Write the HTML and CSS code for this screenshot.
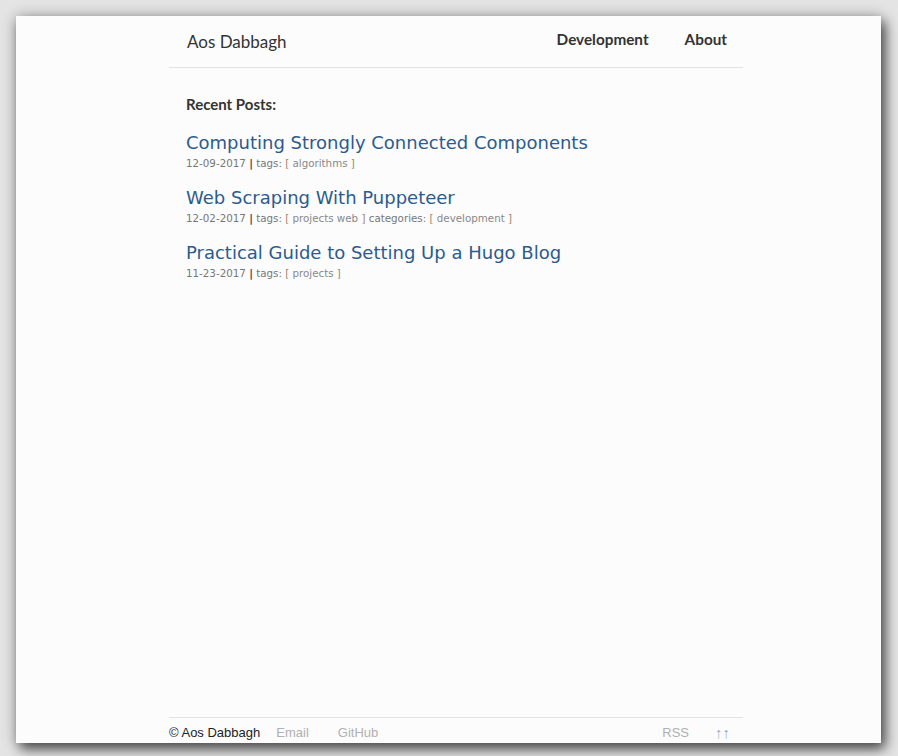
FILE: index.html
```html
<!DOCTYPE html>
<html>
<head>
<meta charset="utf-8">
<link rel="stylesheet" href="styles.css">
</head>
<body>
<div class="window">
  <div class="page">
    <header class="site-header">
      <a class="brand" href="#">Aos Dabbagh</a>
      <nav class="nav">
        <a href="#">Development</a>
        <a href="#">About</a>
      </nav>
    </header>
    <main class="content">
      <h2 class="section-title">Recent Posts:</h2>
      <ul class="posts">
        <li class="post">
          <a class="post-title" href="#">Computing Strongly Connected Components</a>
          <div class="meta">12-09-2017 <span class="sep">|</span> tags: <span class="br">[</span> <span class="tag">algorithms</span> <span class="br">]</span></div>
        </li>
        <li class="post">
          <a class="post-title" href="#">Web Scraping With Puppeteer</a>
          <div class="meta">12-02-2017 <span class="sep">|</span> tags: <span class="br">[</span> <span class="tag">projects</span> <span class="tag">web</span> <span class="br">]</span> categories: <span class="br">[</span> <span class="tag">development</span> <span class="br">]</span></div>
        </li>
        <li class="post">
          <a class="post-title" href="#">Practical Guide to Setting Up a Hugo Blog</a>
          <div class="meta">11-23-2017 <span class="sep">|</span> tags: <span class="br">[</span> <span class="tag">projects</span> <span class="br">]</span></div>
        </li>
      </ul>
    </main>
    <footer class="site-footer">
      <div class="footer-left">
        <span class="copy">© Aos Dabbagh</span>
        <a class="flink" href="#">Email</a>
        <a class="flink" href="#">GitHub</a>
      </div>
      <div class="footer-right">
        <a class="flink" href="#">RSS</a>
        <a class="top" href="#">↑↑</a>
      </div>
    </footer>
  </div>
</div>
</body>
</html>
```

FILE: styles.css
```css
html, body {
  margin: 0;
  padding: 0;
  height: 756px;
  background: #e4e4e4;
  overflow: hidden;
}
body {
  padding: 16px 0 0 16px;
  box-sizing: border-box;
}
.window {
  width: 865px;
  height: 727px;
  background: #fcfcfc;
  box-shadow: 4px 6px 12px rgba(0,0,0,0.65), 0 0 14px rgba(0,0,0,0.22);
  overflow: hidden;
}
.page {
  width: 574px;
  margin-left: 153px;
  height: 727px;
  display: flex;
  flex-direction: column;
}
a { text-decoration: none; }
.site-header {
  height: 51px;
  border-bottom: 1px solid #e2e2e2;
  display: flex;
  justify-content: space-between;
  align-items: center;
  padding: 0 16px 0 18px;
  font-family: Lato, "Open Sans", sans-serif;
}
.brand {
  color: #333;
  font-size: 17px;
  margin-bottom: 1px;
}
.nav {
  display: flex;
  gap: 36px;
  margin-bottom: 6px;
}
.nav a {
  color: #333;
  font-weight: bold;
  font-size: 15.3px;
}
.content {
  flex: 1;
  padding: 26px 17px 0;
}
.section-title {
  font-family: Lato, "Open Sans", sans-serif;
  font-size: 15px;
  line-height: 20px;
  font-weight: bold;
  color: #333;
  margin: 0 0 17px;
}
.posts {
  list-style: none;
  margin: 0;
  padding: 0;
}
.post {
  height: 55px;
}
.post-title {
  display: block;
  font-family: "DejaVu Sans", Verdana, sans-serif;
  font-size: 18px;
  line-height: 24px;
  color: #2c5b8d;
}
.meta {
  font-family: "DejaVu Sans", Verdana, sans-serif;
  font-size: 10.3px;
  line-height: 14px;
  margin-top: 1px;
  color: #777;
}
.sep { color: #444; font-weight: bold; }
.br { color: #a08468; }
.tag { color: #888; }
.site-footer {
  border-top: 1px solid #e2e2e2;
  height: 23px;
  display: flex;
  justify-content: space-between;
  align-items: flex-end;
  font-family: "Liberation Sans", Arial, sans-serif;
  font-size: 13px;
  line-height: 16px;
  padding-bottom: 2px;
}
.footer-left, .footer-right {
  display: flex;
  gap: 16px;
}
.copy { color: #222; }
.flink { color: #b0b0b0; margin-right: 13px; }
.footer-left .flink:last-child { margin-right: 0; }
.footer-right { padding-right: 13px; gap: 13px; align-items: flex-end; }
.footer-right .flink { margin-right: 13px; }
.top { color: #9aaccc; font-size: 15px; line-height: 16px; }
```
